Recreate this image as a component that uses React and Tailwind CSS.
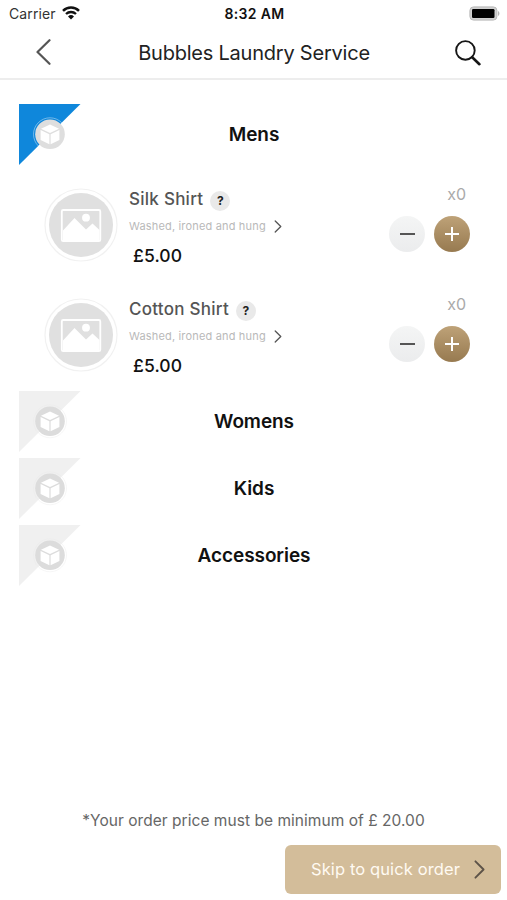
import React from "react";

const items = [
  { name: "Silk Shirt", description: "Washed, ironed and hung", price: "£5.00", count: 0 },
  { name: "Cotton Shirt", description: "Washed, ironed and hung", price: "£5.00", count: 0 },
];

const categories = [
  { name: "Mens", items, active: true },
  { name: "Womens", items: [] },
  { name: "Kids", items: [] },
  { name: "Accessories", items: [] },
];

const Chevron = ({ className }) => (
  <svg viewBox="0 0 8 14" fill="none" stroke="currentColor" className={className}>
    <path d="M1 1l6 6-6 6" strokeWidth="1.4" strokeLinecap="round" strokeLinejoin="round" />
  </svg>
);

const StatusBar = () => (
  <div className="grid h-[27px] grid-cols-[1fr_auto_1fr] items-center pl-[9px] pr-[7px]">
    <div className="flex items-center gap-[6px] text-[14px] text-[#333]">
      <span className="tracking-[0.1px]">Carrier</span>
      <svg viewBox="0 0 18 14" fill="none" stroke="#111" className="mb-px h-[14px] w-[18px]">
        <path d="M1 4.8a11.4 11.4 0 0 1 16 0" strokeWidth="2.5" />
        <path d="M4 8a7.2 7.2 0 0 1 10 0" strokeWidth="2.3" />
        <path d="M9 13.6L6 10.4a4.3 4.3 0 0 1 6 0z" fill="#111" stroke="none" />
      </svg>
    </div>
    <div className="text-center text-[14px] font-semibold tracking-[0.3px] text-[#111]">8:32 AM</div>
    <svg viewBox="0 0 31 15" className="h-[15px] w-[31px] justify-self-end">
      <rect x="0.9" y="0.9" width="27" height="13.2" rx="3.6" fill="#d0d0d0" stroke="#b9b9b9" />
      <rect x="3" y="3" width="22.5" height="9" rx="1.2" fill="#000" />
      <path d="M29 5v5c1.9-.8 1.9-4.2 0-5z" fill="#b5b5b5" />
    </svg>
  </div>
);

const Header = () => (
  <header className="flex h-[53px] items-center justify-between border-b-2 border-[#ededed] pl-[36px] pr-[26px]">
    <button aria-label="Back">
      <svg viewBox="0 0 15 26" fill="none" stroke="#555" className="mb-px h-[26px] w-[15px]">
        <path d="M13.5 1.2L1.5 13l12 11.8" strokeWidth="2.2" strokeLinecap="round" strokeLinejoin="round" />
      </svg>
    </button>
    <h1 className="ml-[2px] text-[20px] leading-none tracking-[-0.22px] text-[#222]">Bubbles Laundry Service</h1>
    <button aria-label="Search">
      <svg viewBox="0 0 26 26" fill="none" stroke="#161616" className="size-[26px]">
        <circle cx="10.4" cy="10.4" r="9.3" strokeWidth="1.9" />
        <path d="M17.2 17.2l7.2 7" strokeWidth="2.6" strokeLinecap="round" />
      </svg>
    </button>
  </header>
);

const CategoryBadge = ({ active }) => (
  <svg viewBox="0 0 62 62" className="size-[62px] shrink-0">
    <path d="M0 0h61.5L0 61z" fill={active ? "#0f87db" : "#f0f0f0"} />
    <circle cx="31" cy="30.3" r="16.5" fill="none" stroke={active ? "#fff" : "#e8e8e8"} strokeOpacity="0.45" strokeWidth="0.9" />
    <circle cx="31" cy="30.3" r="14.8" fill={active ? "#dedede" : "#dcdcdc"} />
    <path d="M31 20.5l9 4.2-9 4.4-9-4.4z" fill="#fff" />
    <path d="M21.6 26.1l8.8 4.2v10l-8.8-4.3zM40.4 26.1L31.6 30.3v10l8.8-4.3z" fill="#fff" />
  </svg>
);

const Thumbnail = () => (
  <svg viewBox="0 0 74 74" className="size-[74px] shrink-0">
    <circle cx="37" cy="37" r="36" fill="#fff" stroke="#f1f1f1" strokeWidth="1.2" />
    <circle cx="37" cy="37" r="32" fill="#e0e0e0" />
    <rect x="17.8" y="22" width="38.5" height="31.2" rx="1.5" fill="none" stroke="#fff" strokeWidth="1.8" />
    <circle cx="42" cy="29.7" r="3.9" fill="#fff" />
    <path d="M19 42.5L30.5 30 42 41.5l6.5-6 7 6.5v11H19z" fill="#fff" />
  </svg>
);

const ItemRow = ({ item }) => (
  <div className="flex h-[110px] items-center pb-[2px] pl-[44px] pr-[37px]">
    <Thumbnail />
    <div className="ml-[11px] flex h-[84px] flex-1 flex-col pt-[4px]">
      <div className="flex h-[26px] items-center gap-[7px]">
        <span className="text-[17px] font-medium tracking-[0.26px] text-[#555]">{item.name}</span>
        <span className="mt-[2px] flex size-[20px] items-center justify-center rounded-full bg-[#e9e9e9] text-[12px] font-bold text-[#222]">?</span>
      </div>
      <div className="flex h-[26px] items-center gap-[8px]">
        <span className="text-[11px] tracking-[0.17px] text-[#b9b9b9]">{item.description}</span>
        <Chevron className="h-[13px] w-[8px] text-[#555]" />
      </div>
      <span className="ml-[4px] mt-[7px] text-[17.5px] font-medium leading-[20px] tracking-[0.1px] text-[#111]">{item.price}</span>
    </div>
    <div className="flex h-[86px] flex-col items-end">
      <span className="mr-[4px] mt-px text-[16px] leading-[22px] text-[#aaa]">x{item.count}</span>
      <div className="mt-[11px] flex gap-[9px]">
        <button aria-label="Remove" className="flex size-[36px] items-center justify-center rounded-full bg-linear-to-b from-[#f4f5f5] to-[#ebeced]">
          <span className="h-[2px] w-[15px] bg-[#555]" />
        </button>
        <button aria-label="Add" className="flex size-[36px] items-center justify-center rounded-full bg-linear-to-b from-[#bea278] to-[#977a50]">
          <svg viewBox="0 0 16 16" stroke="#fff" className="size-[16px]">
            <path d="M8 1v14M1 8h14" strokeWidth="2" />
          </svg>
        </button>
      </div>
    </div>
  </div>
);

const Category = ({ category }) => (
  <section>
    <div className="grid h-[67px] grid-cols-[62px_1fr_62px] items-start px-[19px]">
      <CategoryBadge active={category.active} />
      <h2 className="ml-px text-center text-[19px] font-semibold leading-[62px] tracking-[-0.08px] text-[#111]">{category.name}</h2>
    </div>
    {category.items.map((item) => (
      <ItemRow key={item.name} item={item} />
    ))}
  </section>
);

const App = () => {
  return (
    <div className="flex h-[900px] w-[507px] flex-col bg-white font-['Inter',sans-serif]">
      <StatusBar />
      <Header />
      <main className="flex-1 pt-[24px]">
        {categories.map((category) => (
          <Category key={category.name} category={category} />
        ))}
      </main>
      <footer className="flex flex-col px-[6px] pb-[6px]">
        <p className="text-center text-[15.5px] leading-[20px] tracking-[0.04px] text-[#666]">*Your order price must be minimum of £ 20.00</p>
        <button className="mt-[14px] flex h-[49px] w-[216px] items-center justify-between self-end rounded-[6px] bg-[#d3bd9a] pl-[26px] pr-[16px] text-[16.5px] text-[#fffaf2]">
          <span className="tracking-[0.11px]">Skip to quick order</span>
          <Chevron className="h-[19px] w-[11px] text-[#5d5348]" />
        </button>
      </footer>
    </div>
  );
};

export default App;
